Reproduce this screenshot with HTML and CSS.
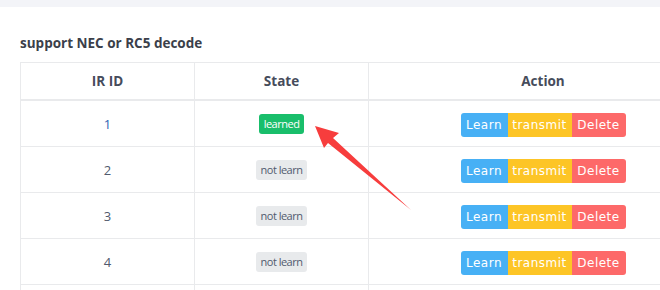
FILE: index.html
```html
<!DOCTYPE html>
<html lang="en">
<head>
  <meta charset="UTF-8" />
  <title>IR decode</title>
  <link rel="stylesheet" href="styles.css">
</head>
<body>
  <div class="topbar"></div>
  <div class="panel">
    <div class="title">support NEC or RC5 decode</div>
    <table class="ir-table">
      <colgroup>
        <col class="col-id">
        <col class="col-state">
        <col class="col-action">
      </colgroup>
      <thead>
        <tr>
          <th>IR ID</th>
          <th>State</th>
          <th>Action</th>
        </tr>
      </thead>
      <tbody>
        <tr>
          <td class="id active">1</td>
          <td><span class="tag learned">learned</span></td>
          <td><div class="btn-group"><button class="btn learn">Learn</button><button class="btn transmit">transmit</button><button class="btn delete">Delete</button></div></td>
        </tr>
        <tr>
          <td class="id">2</td>
          <td><span class="tag">not learn</span></td>
          <td><div class="btn-group"><button class="btn learn">Learn</button><button class="btn transmit">transmit</button><button class="btn delete">Delete</button></div></td>
        </tr>
        <tr>
          <td class="id">3</td>
          <td><span class="tag">not learn</span></td>
          <td><div class="btn-group"><button class="btn learn">Learn</button><button class="btn transmit">transmit</button><button class="btn delete">Delete</button></div></td>
        </tr>
        <tr>
          <td class="id">4</td>
          <td><span class="tag">not learn</span></td>
          <td><div class="btn-group"><button class="btn learn">Learn</button><button class="btn transmit">transmit</button><button class="btn delete">Delete</button></div></td>
        </tr>
        <tr>
          <td></td>
          <td></td>
          <td></td>
        </tr>
      </tbody>
    </table>
  </div>
  <svg class="arrow" width="660" height="290" viewBox="0 0 660 290">
    <polygon points="315,126 339,133 333,138 411,210 328,143 324,148" fill="#f73d3d"/>
  </svg>
</body>
</html>
```

FILE: styles.css
```css
body {
  margin: 0;
  font-family: "Open Sans", "Noto Sans", sans-serif;
  color: #464c5b;
  background: #fff;
  overflow: hidden;
  width: 660px;
  height: 290px;
  position: relative;
}

.topbar {
  height: 7px;
  background-color: #f3f4f8;
}

.panel {
  padding: 0 20px;
}

.title {
  font-size: 13.5px;
  font-weight: 700;
  line-height: 20px;
  margin: 26px 0 9px;
  color: #3b3f4a;
}

.ir-table {
  border-collapse: collapse;
  table-layout: fixed;
  width: 697px;
}

.col-id { width: 174px; }
.col-state { width: 174px; }
.col-action { width: 349px; }

.ir-table th,
.ir-table td {
  border: 1px solid #e9eaec;
  text-align: center;
  padding: 0;
}

.ir-table th {
  height: 36px;
  font-size: 13.5px;
  font-weight: 700;
  color: #464c5b;
  border-bottom: 2px solid #e9eaec;
}

.ir-table td {
  height: 45px;
  font-size: 13px;
  color: #515a6e;
}

.ir-table td.id.active {
  color: #2d64b3;
}

.tag {
  display: inline-block;
  font-size: 11px;
  line-height: 20px;
  padding: 0 5px;
  border-radius: 3px;
  background-color: #e8eaec;
  color: #515a6e;
  letter-spacing: -0.5px;
}

.tag.learned {
  background-color: #19be6b;
  color: #fff;
}

.btn-group {
  display: inline-flex;
  margin-top: 2px;
}

.btn {
  border: none;
  margin: 0;
  height: 24px;
  padding: 0;
  font-family: "DejaVu Sans", sans-serif;
  font-size: 12px;
  letter-spacing: 0.5px;
  color: #fff;
  cursor: pointer;
}

.btn.learn {
  width: 47px;
  background-color: #47b0f5;
  border-radius: 3px 0 0 3px;
}

.btn.transmit {
  width: 64px;
  background-color: #fdc526;
}

.btn.delete {
  width: 54px;
  background-color: #fd6969;
  border-radius: 0 3px 3px 0;
}

.arrow {
  position: absolute;
  top: 0;
  left: 0;
  pointer-events: none;
}
```
